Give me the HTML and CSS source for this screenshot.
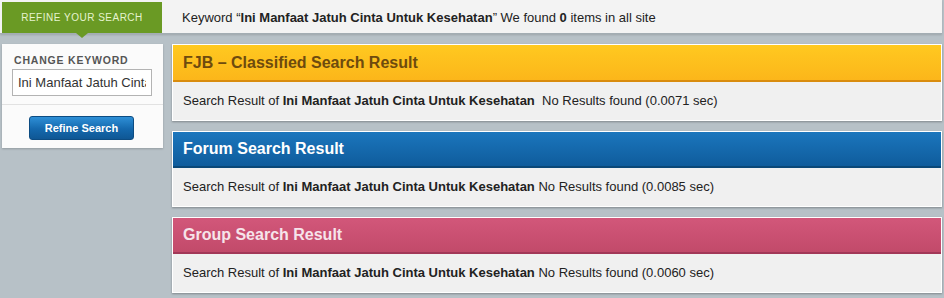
FILE: index.html
```html
<!DOCTYPE html>
<html lang="en">
<head>
    <meta charset="UTF-8">
    <title>Search Result</title>
    <link rel="stylesheet" href="styles.css">
</head>
<body>

    <div class="topbar">
        <div class="tab">REFINE YOUR SEARCH</div>
        <div class="summary">Keyword &ldquo;<b>Ini Manfaat Jatuh Cinta Untuk Kesehatan</b>&rdquo; We found <b>0</b> items in all site</div>
    </div>

    <div class="main">
        <div class="sidebar">
            <div class="side-top">
                <label for="keyword">CHANGE KEYWORD</label>
                <input type="text" id="keyword" value="Ini Manfaat Jatuh Cinta Untuk Kesehatan">
            </div>
            <div class="side-bottom">
                <button type="button">Refine Search</button>
            </div>
        </div>

        <div class="results">
            <div class="result-box fjb">
                <div class="result-head">FJB &ndash; Classified Search Result</div>
                <div class="result-body">Search Result of <b>Ini Manfaat Jatuh Cinta Untuk Kesehatan</b>&nbsp; No Results found (0.0071 sec)</div>
            </div>

            <div class="result-box forum">
                <div class="result-head">Forum Search Result</div>
                <div class="result-body">Search Result of <b>Ini Manfaat Jatuh Cinta Untuk Kesehatan</b> No Results found (0.0085 sec)</div>
            </div>

            <div class="result-box group">
                <div class="result-head">Group Search Result</div>
                <div class="result-body">Search Result of <b>Ini Manfaat Jatuh Cinta Untuk Kesehatan</b> No Results found (0.0060 sec)</div>
            </div>
        </div>
    </div>

</body>
</html>
```

FILE: styles.css
```css
body {
    margin: 0;
    padding: 0;
    background-color: #b7c1c7;
    font-family: 'Liberation Sans', Arial, sans-serif;
    font-size: 13px;
    color: #222;
    width: 944px;
    height: 298px;
    overflow: hidden;
}

/* top bar */
.topbar {
    display: flex;
    align-items: stretch;
    height: 33px;
    width: 942px;
    background-color: #f3f3f3;
    border-bottom: 1px solid #a3adb3;
    box-shadow: 0 1px 2px rgba(0, 0, 0, 0.15);
}

.tab {
    position: relative;
    margin: 2px 0 0 2px;
    width: 160px;
    background-color: #6a9a24;
    color: #e6f3cf;
    font-size: 10px;
    letter-spacing: 0.5px;
    display: flex;
    align-items: center;
    justify-content: center;
}

.tab:after {
    content: "";
    position: absolute;
    left: 74px;
    bottom: -5px;
    border-left: 6px solid transparent;
    border-right: 6px solid transparent;
    border-top: 5px solid #6a9a24;
}

.summary {
    padding-left: 20px;
    line-height: 35px;
    white-space: nowrap;
}

/* main area */
.main {
    display: flex;
    align-items: flex-start;
    margin-top: 10px;
    gap: 9px;
}

.sidebar {
    margin-left: 2px;
    width: 161px;
    background-color: #fbfbfb;
    box-shadow: 0 1px 2px rgba(0, 0, 0, 0.2);
}

.side-top {
    padding: 10px 10px 8px 10px;
    border-bottom: 1px solid #e2e2e2;
}

.side-top label {
    display: block;
    font-size: 10.5px;
    font-weight: bold;
    letter-spacing: 0.8px;
    color: #555;
    margin-bottom: 3px;
    padding-left: 2px;
}

.side-top input {
    box-sizing: border-box;
    width: 140px;
    height: 27px;
    border: 1px solid #b3b3b3;
    padding: 0 5px;
    font-family: 'Liberation Sans', Arial, sans-serif;
    font-size: 13px;
    color: #333;
    background-color: #fff;
}

.side-bottom {
    display: flex;
    justify-content: center;
    padding: 11px 0 8px 0;
}

.side-bottom button {
    width: 105px;
    height: 24px;
    margin-right: 2px;
    border: 1px solid #0d4c82;
    border-radius: 3px;
    background: linear-gradient(#2e8fd6, #1468ad 55%, #0f5794);
    color: #fff;
    font-family: 'Liberation Sans', Arial, sans-serif;
    font-size: 11px;
    font-weight: bold;
    cursor: pointer;
}

/* result boxes */
.results {
    flex: 1;
    margin-right: 2px;
    display: flex;
    flex-direction: column;
    gap: 10px;
}

.result-box {
    background-color: #f0f0f0;
    border: 1px solid #fff;
    box-shadow: 0 1px 2px rgba(0, 0, 0, 0.3);
}

.result-head {
    height: 35px;
    padding-left: 10px;
    display: flex;
    align-items: center;
    font-size: 16px;
    font-weight: bold;
    border-bottom: 2px solid;
}

.result-body {
    height: 38px;
    padding-left: 10px;
    line-height: 38px;
    white-space: pre;
}

.fjb .result-head {
    background: linear-gradient(#ffc920, #fcb61a);
    border-bottom-color: #d98c0e;
    color: #6e4b0e;
}

.forum .result-head {
    height: 34px;
    background: linear-gradient(#1b76bd, #0f5c9c);
    border-bottom-color: #0a4878;
    color: #fff;
}

.group .result-head {
    height: 34px;
    background: linear-gradient(#d2577a, #c24a6a);
    border-bottom-color: #a23858;
    color: #f6e4ea;
}
```
